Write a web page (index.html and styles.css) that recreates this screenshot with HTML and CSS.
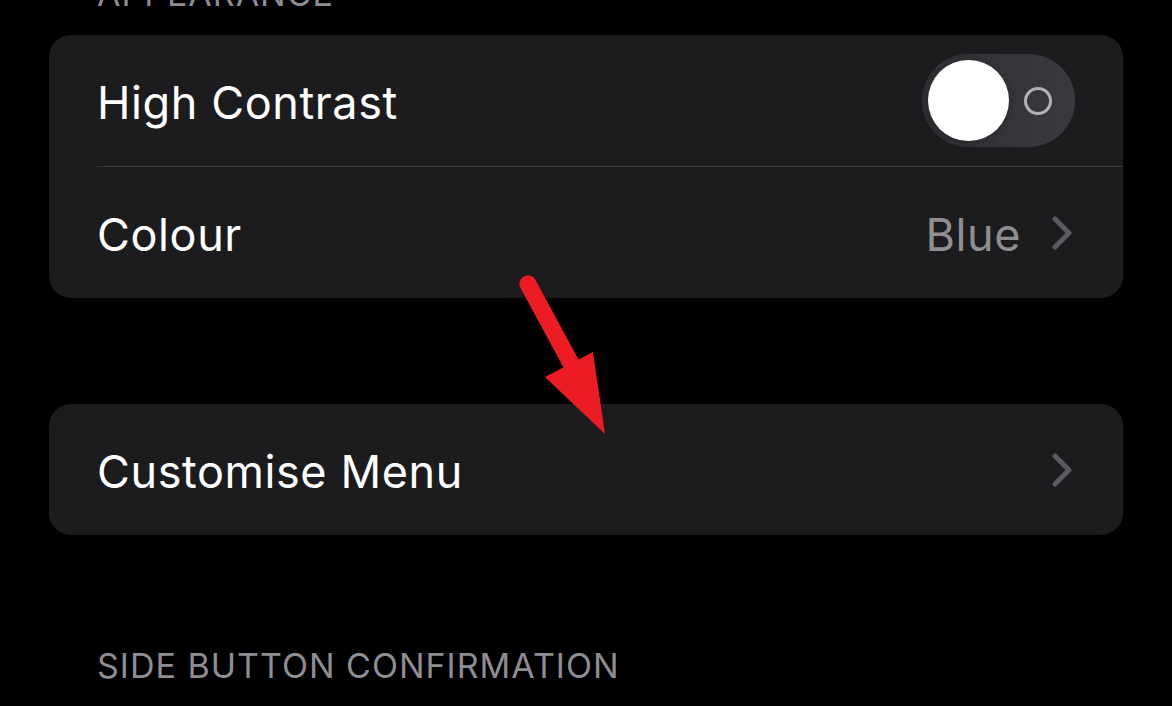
FILE: index.html
```html
<!DOCTYPE html>
<html>
<head>
  <meta charset="UTF-8">
  <meta name="viewport" content="width=device-width, initial-scale=1.0">
  <title>Accessibility Shortcut</title>
  <link rel="stylesheet" href="styles.css">
</head>
<body>
  <div class="page">
    <div class="section-title top-title">APPEARANCE</div>

    <div class="group">
      <div class="row">
        <span class="row-label">High Contrast</span>
        <div class="switch">
          <div class="switch-knob"></div>
          <div class="switch-ring"></div>
        </div>
      </div>
      <div class="row">
        <span class="row-label">Colour</span>
        <span class="row-value">Blue</span>
        <svg class="chevron" width="20" height="34" viewBox="0 0 20 34">
          <path d="M3 3 L17 17 L3 31" fill="none" stroke="currentColor" stroke-width="5" stroke-linecap="round" stroke-linejoin="round"/>
        </svg>
      </div>
    </div>

    <div class="group group-menu">
      <div class="row">
        <span class="row-label">Customise Menu</span>
        <svg class="chevron" width="20" height="34" viewBox="0 0 20 34">
          <path d="M3 3 L17 17 L3 31" fill="none" stroke="currentColor" stroke-width="5" stroke-linecap="round" stroke-linejoin="round"/>
        </svg>
      </div>
    </div>

    <div class="section-title bottom-title">SIDE BUTTON CONFIRMATION</div>

    <svg class="pointer" width="140" height="180" viewBox="0 0 140 180">
      <line x1="10" y1="12" x2="62" y2="108" stroke="#ed1c24" stroke-width="17" stroke-linecap="round"/>
      <polygon points="27,105 75,80 87,162" fill="#ed1c24"/>
    </svg>
  </div>
</body>
</html>
```

FILE: styles.css
```css
body {
  margin: 0;
  background: #000;
  font-family: Inter, "Noto Sans", Arial, sans-serif;
  color: #fff;
  overflow: hidden;
}

.page {
  position: relative;
  display: flow-root;
  width: 1172px;
  height: 706px;
  padding: 0 49px;
  box-sizing: border-box;
}

.section-title {
  font-size: 34px;
  color: #8d8d93;
  padding-left: 48px;
  line-height: 40px;
  letter-spacing: 1px;
}

.top-title {
  margin-top: -26px;
  margin-bottom: 21px;
}

.bottom-title {
  margin-top: 111px;
}

.group {
  background: #1c1c1e;
  border-radius: 22px;
  overflow: hidden;
}

.group-menu {
  margin-top: 106px;
}

.row {
  display: flex;
  align-items: center;
  height: 131px;
  margin-left: 48px;
  padding-right: 48px;
  box-sizing: border-box;
}

.row + .row {
  border-top: 1px solid #3a3a3c;
  height: 132px;
}

.row-label {
  font-size: 45px;
  flex: 1;
  padding-top: 4px;
  letter-spacing: 0.6px;
}

.row-value {
  font-size: 45px;
  color: #8e8e93;
  margin-right: 31px;
  padding-top: 4px;
  letter-spacing: 0.6px;
}

.chevron {
  color: #5a5a5f;
  margin-right: 3px;
}

.switch {
  position: relative;
  width: 153px;
  height: 93px;
  border-radius: 47px;
  background: linear-gradient(90deg, #2f2f33, #3a3a3e);
}

.switch-knob {
  position: absolute;
  left: 6px;
  top: 6px;
  width: 81px;
  height: 81px;
  border-radius: 50%;
  background: #fff;
  box-shadow: 0 2px 6px rgba(0, 0, 0, 0.25);
}

.switch-ring {
  position: absolute;
  left: 102px;
  top: 33px;
  width: 22px;
  height: 22px;
  border: 3px solid #b3b3b5;
  border-radius: 50%;
}

.pointer {
  position: absolute;
  left: 518px;
  top: 272px;
}
```
